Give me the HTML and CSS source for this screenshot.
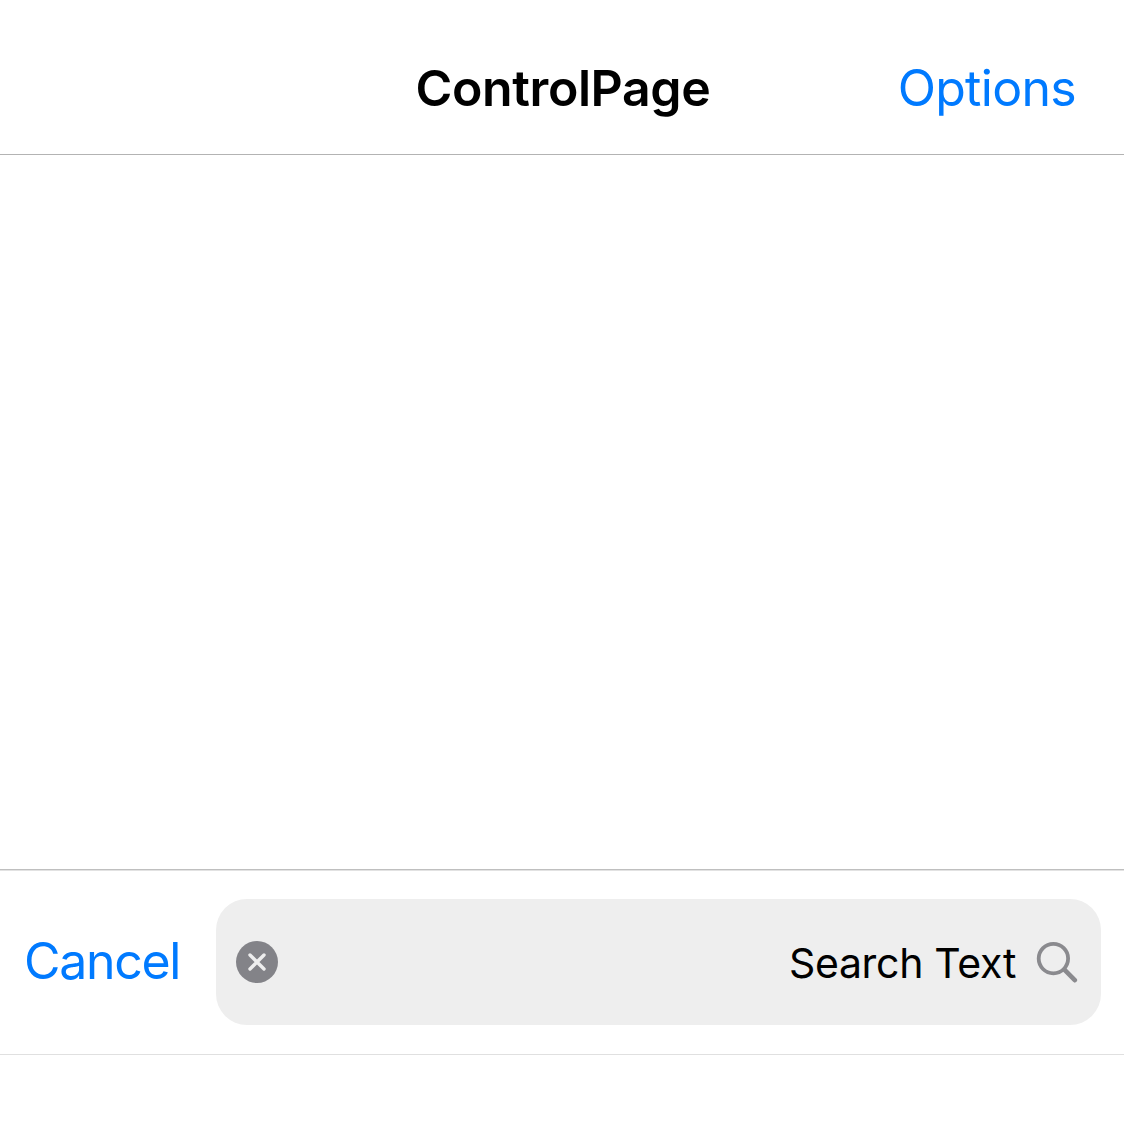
FILE: index.html
```html
<!DOCTYPE html>
<html lang="en">
<head>
<meta charset="utf-8">
<title>ControlPage</title>
<link rel="stylesheet" href="styles.css">
</head>
<body>
<header class="navbar">
  <h1 class="title">ControlPage</h1>
  <button class="options">Options</button>
</header>
<main class="content"></main>
<section class="searchbar">
  <button class="cancel">Cancel</button>
  <div class="field">
    <svg class="clear" viewBox="0 0 42 43"><circle cx="21" cy="21" r="21"/><path d="M14 14 28 28M28 14 14 28"/></svg>
    <span class="query">Search Text</span>
    <svg class="search" viewBox="0 0 42 42"><circle cx="17.4" cy="17.6" r="14.7"/><path d="M28.4 28.6 38.8 39.2"/></svg>
  </div>
</section>
</body>
</html>
```
FILE: styles.css
```css
* { box-sizing: border-box; }
body {
  margin: 0;
  height: 1126px;
  display: flex;
  flex-direction: column;
  overflow: hidden;
  background: #fff;
  color: #000;
  font-family: Inter, "Liberation Sans", sans-serif;
}
button {
  padding: 0;
  border: 0;
  background: none;
  color: #007aff;
  font: inherit;
  white-space: nowrap;
}
.navbar {
  display: grid;
  grid-template-columns: 1fr auto 1fr;
  align-items: center;
  height: 155px;
  padding: 22px 48px 0;
  border-bottom: 1px solid #b3b3b3;
}
.title {
  grid-column: 2;
  margin: 0;
  padding-left: 2px;
  font-size: 50px;
  line-height: 60px;
  font-weight: 600;
  letter-spacing: -0.4px;
}
.options {
  justify-self: end;
  font-size: 50px;
  line-height: 60px;
  letter-spacing: -0.7px;
}
.content { height: 714px; }
.searchbar {
  display: flex;
  align-items: center;
  height: 186px;
  padding: 0 23px 0 24px;
  border-top: 1px solid #bfbfbf;
  border-bottom: 1px solid #e0e0e0;
  box-shadow: inset 0 1px #e2e2e2;
}
.cancel {
  width: 192px;
  padding-bottom: 3px;
  font-size: 50px;
  line-height: 60px;
  text-align: left;
  letter-spacing: -1.3px;
}
.field {
  display: flex;
  align-items: center;
  flex: 1;
  height: 126px;
  padding: 0 23px 0 20px;
  border-radius: 31px;
  background: #eee;
}
.clear { width: 42px; height: 43px; fill: #838388; }
.clear path { fill: none; stroke: #eee; stroke-width: 3.4; stroke-linecap: round; }
.query {
  margin-left: auto;
  margin-right: 20px;
  padding-top: 2px;
  font-size: 41px;
  line-height: 52px;
  letter-spacing: -0.3px;
  white-space: nowrap;
}
.search { width: 42px; height: 42px; fill: none; stroke: #8a8a8e; stroke-width: 3.8; stroke-linecap: round; }
.search path { stroke-width: 4.6; }
```
